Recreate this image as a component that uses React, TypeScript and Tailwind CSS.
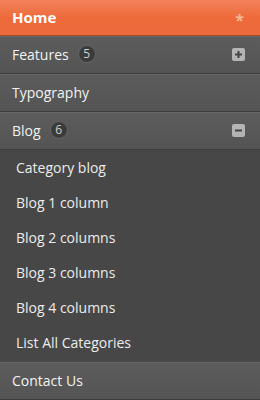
const font = { fontFamily: '"Open Sans", "Noto Sans", sans-serif' };

function Badge({ n }: { n: number }) {
  return (
    <span className="ml-[9px] inline-flex h-[18px] w-[18px] items-center justify-center rounded-full border border-[#666] bg-[#3b3b3b] text-[12px] leading-none text-[#cfcfcf]">
      {n}
    </span>
  );
}

function Toggle({ open }: { open: boolean }) {
  return (
    <span className="flex h-[13px] w-[13px] items-center justify-center rounded-[2px] bg-[#b4b4b4]">
      <svg width="9" height="9" viewBox="0 0 9 9">
        <rect x="1" y="3.5" width="7" height="2" fill="#444" />
        {!open && <rect x="3.5" y="1" width="2" height="7" fill="#444" />}
      </svg>
    </span>
  );
}

function Row({
  label,
  badge,
  toggle,
}: {
  label: string;
  badge?: number;
  toggle?: "open" | "closed";
}) {
  return (
    <div className="flex h-[38px] items-center justify-between border-b border-[#3e3e3e] border-t border-t-[#676767] bg-gradient-to-b from-[#5c5c5c] to-[#545454] pb-[2px] pl-3 pr-[15px] text-[14px] text-[#f2f2f2]">
      <span className="flex items-center">
        {label}
        {badge !== undefined && <Badge n={badge} />}
      </span>
      {toggle && <Toggle open={toggle === "open"} />}
    </div>
  );
}

const sub = [
  "Category blog",
  "Blog 1 column",
  "Blog 2 columns",
  "Blog 3 columns",
  "Blog 4 columns",
  "List All Categories",
];

export default function App() {
  return (
    <div className="h-[400px] w-[260px] overflow-hidden bg-[#474747]" style={font}>
      <div className="flex h-[36px] items-center justify-between border-b border-[#a84a28] bg-gradient-to-b from-[#f3825a] via-[#ee6a3b] to-[#ec6a3c] pb-px pl-3 pr-[16px] text-[15px] font-bold text-white">
        <span>Home</span>
        <span className="pt-[5px] text-[16px] leading-none text-[#f9b894]">*</span>
      </div>
      <Row label="Features" badge={5} toggle="closed" />
      <Row label="Typography" />
      <Row label="Blog" badge={6} toggle="open" />
      <ul className="bg-[#474747] pb-[2px]">
        {sub.map((s) => (
          <li key={s} className="flex h-[35px] items-center pb-px pl-4 text-[14px] text-[#ececec]">
            {s}
          </li>
        ))}
      </ul>
      <Row label="Contact Us" />
    </div>
  );
}
